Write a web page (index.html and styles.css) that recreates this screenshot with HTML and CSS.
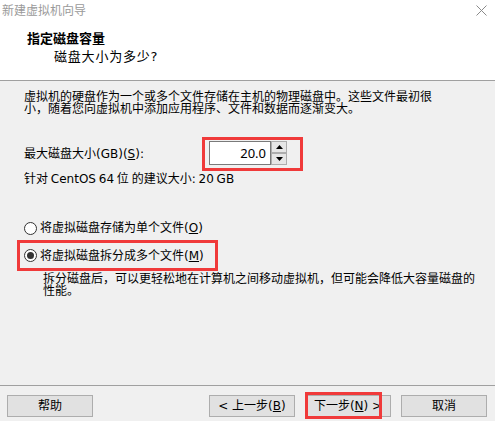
FILE: index.html
```html
<!DOCTYPE html>
<html lang="zh-CN">
<head>
<meta charset="utf-8">
<title>新建虚拟机向导</title>
<link rel="stylesheet" href="styles.css">
</head>
<body>
<div class="window">
  <header class="header">
    <div class="titlebar">
      <span class="title">新建虚拟机向导</span>
      <svg class="close" width="11" height="11" viewBox="0 0 11 11"><path d="M0.5 0.5 L10.5 10.5 M10.5 0.5 L0.5 10.5" stroke="#8a8a8a" stroke-width="1" fill="none"/></svg>
    </div>
    <div class="heading">指定磁盘容量</div>
    <div class="subheading">磁盘大小为多少?</div>
  </header>

  <main class="content">
    <p class="intro">虚拟机的硬盘作为一个或多个文件存储在主机的物理磁盘中。这些文件最初很小，随着您向虚拟机中添加应用程序、文件和数据而逐渐变大。</p>

    <div class="size-row">
      <span class="size-label">最大磁盘大小(GB)(<u>S</u>):</span>
      <div class="mark spin-mark">
        <div class="spinner">
          <div class="spin-input">20.0</div>
          <div class="spin-btns">
            <div class="spin-btn"><svg width="7" height="4" viewBox="0 0 7 4"><path d="M3.5 0 L7 4 L0 4 Z" fill="#000"/></svg></div>
            <div class="spin-btn"><svg width="7" height="4" viewBox="0 0 7 4"><path d="M0 0 L7 0 L3.5 4 Z" fill="#000"/></svg></div>
          </div>
        </div>
      </div>
    </div>

    <div class="recommend">针对 CentOS 64 位 的建议大小: 20 GB</div>

    <div class="options">
      <div class="radio-row">
        <span class="radio"></span>
        <span class="radio-text">将虚拟磁盘存储为单个文件(<u>O</u>)</span>
      </div>
      <div class="mark radio-mark">
        <div class="radio-row">
          <span class="radio checked"></span>
          <span class="radio-text">将虚拟磁盘拆分成多个文件(<u>M</u>)</span>
        </div>
      </div>
      <p class="desc">拆分磁盘后，可以更轻松地在计算机之间移动虚拟机，但可能会降低大容量磁盘的性能。</p>
    </div>
  </main>

  <footer class="footer">
    <div class="btn">帮助</div>
    <div class="nav">
      <div class="btn">&lt; 上一步(<u>B</u>)</div>
      <div class="btn next">下一步(<u>N</u>) &gt;<span class="next-mark"></span></div>
      <div class="btn">取消</div>
    </div>
  </footer>
</div>
</body>
</html>
```

FILE: styles.css
```css
* {
  box-sizing: border-box;
}

html, body {
  margin: 0;
  padding: 0;
}

body {
  font-family: "DejaVu Sans", "Noto Sans CJK SC", sans-serif;
  font-size: 12px;
  color: #000;
  background: #f0f0f0;
}

.window {
  width: 495px;
  height: 421px;
  display: flex;
  flex-direction: column;
  background: #f0f0f0;
  overflow: hidden;
}

/* header */
.header {
  height: 81px;
  flex: 0 0 81px;
  background: #fff;
  border-bottom: 1px solid #a0a0a0;
}

.titlebar {
  height: 22px;
  display: flex;
  align-items: center;
  justify-content: space-between;
  padding: 0 8px 0 2px;
}

.title {
  color: #9a9a9a;
  font-size: 12px;
  line-height: 22px;
}

.close {
  display: block;
  margin-top: -1px;
}

.heading {
  margin-top: 10px;
  padding-left: 27px;
  font-size: 13px;
  font-weight: bold;
  line-height: 14px;
}

.subheading {
  margin-top: 4px;
  padding-left: 54px;
  font-size: 13px;
  letter-spacing: 0.8px;
  line-height: 14px;
}

/* content */
.content {
  padding: 10px 0 0 24px;
}

.intro {
  margin: 0;
  width: 414px;
  line-height: 12px;
}

.size-row {
  margin-top: 22px;
  display: flex;
  align-items: center;
  height: 34px;
}

.size-label {
  flex: 0 0 178px;
  line-height: 14px;
}

.mark {
  border: 3px solid #f03a3a;
}

.spin-mark {
  width: 101px;
  height: 34px;
  padding: 1px 0 0 4px;
}

.spinner {
  display: flex;
  height: 24px;
}

.spin-input {
  width: 62px;
  height: 24px;
  background: #fff;
  border: 1px solid #7a7a7a;
  font-family: "Noto Sans", sans-serif;
  font-size: 13px;
  line-height: 22px;
  text-align: right;
  padding-right: 4px;
}

.spin-btns {
  width: 16px;
  display: flex;
  flex-direction: column;
}

.spin-btn {
  height: 12px;
  background: #e6e6e6;
  border: 1px solid #adadad;
  display: flex;
  align-items: center;
  justify-content: center;
}

.recommend {
  margin-top: 1px;
  line-height: 14px;
  word-spacing: -1px;
}

.options {
  margin-top: 35px;
}

.radio-row {
  display: flex;
  align-items: center;
  height: 14px;
}

.radio {
  width: 13px;
  height: 13px;
  border: 1px solid #333;
  border-radius: 50%;
  background: #fff;
  margin-right: 3px;
  display: flex;
  align-items: center;
  justify-content: center;
}

.radio.checked::after {
  content: "";
  width: 7px;
  height: 7px;
  border-radius: 50%;
  background: #333;
}

.radio-text {
  line-height: 14px;
}

.radio-mark {
  margin: 5px 0 0 -7px;
  width: 201px;
  height: 31px;
  padding-left: 4px;
  display: flex;
  align-items: center;
}

.desc {
  margin: 2px 0 0;
  padding-left: 19px;
  width: 457px;
  line-height: 12px;
}

/* footer */
.footer {
  margin-top: auto;
  height: 36px;
  flex: 0 0 36px;
  border-top: 1px solid #a0a0a0;
  display: flex;
  justify-content: space-between;
  align-items: flex-start;
  padding: 9px 8px 0 7px;
}

.nav {
  display: flex;
  gap: 10px;
}

.btn {
  width: 86px;
  height: 22px;
  background: #e1e1e1;
  border: 1px solid #adadad;
  display: flex;
  align-items: center;
  justify-content: center;
  line-height: 14px;
}

.next {
  position: relative;
}

.next-mark {
  position: absolute;
  left: -1px;
  top: -4px;
  width: 77px;
  height: 27px;
  border: 3px solid #f03a3a;
}
```
